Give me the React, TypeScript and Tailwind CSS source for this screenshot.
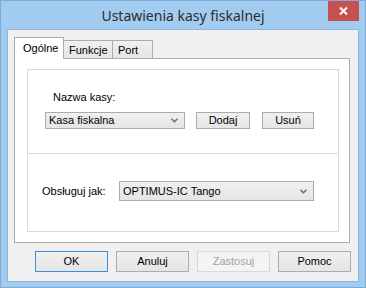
import React from "react";

const sans = { fontFamily: '"Liberation Sans", Arial, sans-serif' };

function Chevron() {
  return (
    <svg width="7" height="5" viewBox="0 0 7 5" className="shrink-0">
      <path d="M0.5 0.8 L3.5 3.8 L6.5 0.8" fill="none" stroke="#6a6a6a" strokeWidth="1.4" />
    </svg>
  );
}

function Btn({ label, w, h, def, disabled }: { label: string; w: string; h: string; def?: boolean; disabled?: boolean }) {
  const base = "flex items-center justify-center text-[11px] leading-[13px] border ";
  const cls = disabled
    ? "bg-[#f4f4f4] border-[#d9d9d9] text-[#a3a3a3]"
    : def
    ? "bg-gradient-to-b from-[#f0f0f0] to-[#e5e5e5] border-[#3c8fe0] text-black"
    : "bg-gradient-to-b from-[#f0f0f0] to-[#e5e5e5] border-[#acacac] text-black";
  return (
    <div className={base + cls + " " + w + " " + h} style={sans}>
      {label}
    </div>
  );
}

export default function App() {
  return (
    <div className="w-[366px] h-[288px] bg-[#a2cbf0] border border-[#7fa9d6] flex flex-col" style={sans}>
      {/* title bar */}
      <div className="h-[28px] grid grid-cols-[1fr_auto_1fr] pr-[6px]">
        <div />
        <div
          className="self-center text-[14px] leading-[20px] text-[#2d2d2d] pt-[2px] pl-[6px]"
          style={{ fontFamily: '"Noto Sans", "Open Sans", sans-serif' }}
        >
          Ustawienia kasy fiskalnej
        </div>
        <div className="flex justify-end items-start">
          <div className="w-[31px] h-[20px] bg-[#c75050] flex items-center justify-center">
            <svg width="9" height="8" viewBox="0 0 9 8">
              <path d="M1 0.5 L8 7.5 M8 0.5 L1 7.5" stroke="#ffffff" strokeWidth="2" />
            </svg>
          </div>
        </div>
      </div>

      {/* client */}
      <div className="mx-[6px] border border-[#8fb6de] bg-[#f0f0f0] h-[253px] flex flex-col pt-[7px] pl-[6px] pr-[8px]">
        {/* tabs */}
        <div className="flex items-end h-[21px]">
          <div className="w-[50px] h-[22px] -mb-px bg-white border-x border-t border-[#acacac] relative z-10 pl-[8px] pt-[4px] text-[11px] leading-[13px] text-black">
            Ogólne
          </div>
          <div className="w-[49px] h-[18px] border-r border-t border-[#acacac] bg-gradient-to-b from-[#f0f0f0] to-[#e5e5e5] pl-[5px] pt-[3px] text-[11px] leading-[13px] text-black">
            Funkcje
          </div>
          <div className="w-[40px] h-[18px] border-r border-t border-[#acacac] bg-gradient-to-b from-[#f0f0f0] to-[#e5e5e5] pl-[5px] pt-[3px] text-[11px] leading-[13px] text-black">
            Port
          </div>
        </div>

        {/* panel */}
        <div className="h-[185px] bg-white border border-[#acacac] pl-[12px] pr-[10px] pt-[10px] pb-[10px] flex flex-col">
          <div className="flex-1 border border-[#dadada] flex flex-col">
            {/* section 1 */}
            <div className="h-[83px] pt-[21px] pl-[17px] flex flex-col">
              <div className="ml-[8px] text-[11px] leading-[13px] text-black">Nazwa kasy:</div>
              <div className="mt-[8px] flex items-center">
                <div className="w-[140px] h-[17px] border border-[#acacac] bg-gradient-to-b from-[#f0f0f0] to-[#e5e5e5] flex items-center justify-between pl-[3px] pr-[6px] text-[11px] leading-[13px] text-black">
                  <span>Kasa fiskalna</span>
                  <Chevron />
                </div>
                <div className="ml-[11px]">
                  <Btn label="Dodaj" w="w-[54px]" h="h-[17px]" />
                </div>
                <div className="ml-[12px]">
                  <Btn label="Usuń" w="w-[52px]" h="h-[17px]" />
                </div>
              </div>
            </div>
            <div className="h-px bg-[#dadada]" />
            {/* section 2 */}
            <div className="flex-1 pt-[27px] pl-[14px]">
              <div className="flex items-center">
                <div className="w-[77px] text-[11px] leading-[13px] text-black">Obsługuj jak:</div>
                <div className="w-[195px] h-[20px] border border-[#acacac] bg-gradient-to-b from-[#f0f0f0] to-[#e5e5e5] flex items-center justify-between pl-[3px] pr-[6px] text-[11px] leading-[13px] text-black">
                  <span>OPTIMUS-IC Tango</span>
                  <Chevron />
                </div>
              </div>
            </div>
          </div>
        </div>

        {/* bottom buttons */}
        <div className="mt-[8px] flex justify-end gap-[8px] -mr-[1px]">
          <Btn label="OK" w="w-[73px]" h="h-[21px]" def />
          <Btn label="Anuluj" w="w-[73px]" h="h-[21px]" />
          <Btn label="Zastosuj" w="w-[73px]" h="h-[21px]" disabled />
          <Btn label="Pomoc" w="w-[73px]" h="h-[21px]" />
        </div>
      </div>
    </div>
  );
}
